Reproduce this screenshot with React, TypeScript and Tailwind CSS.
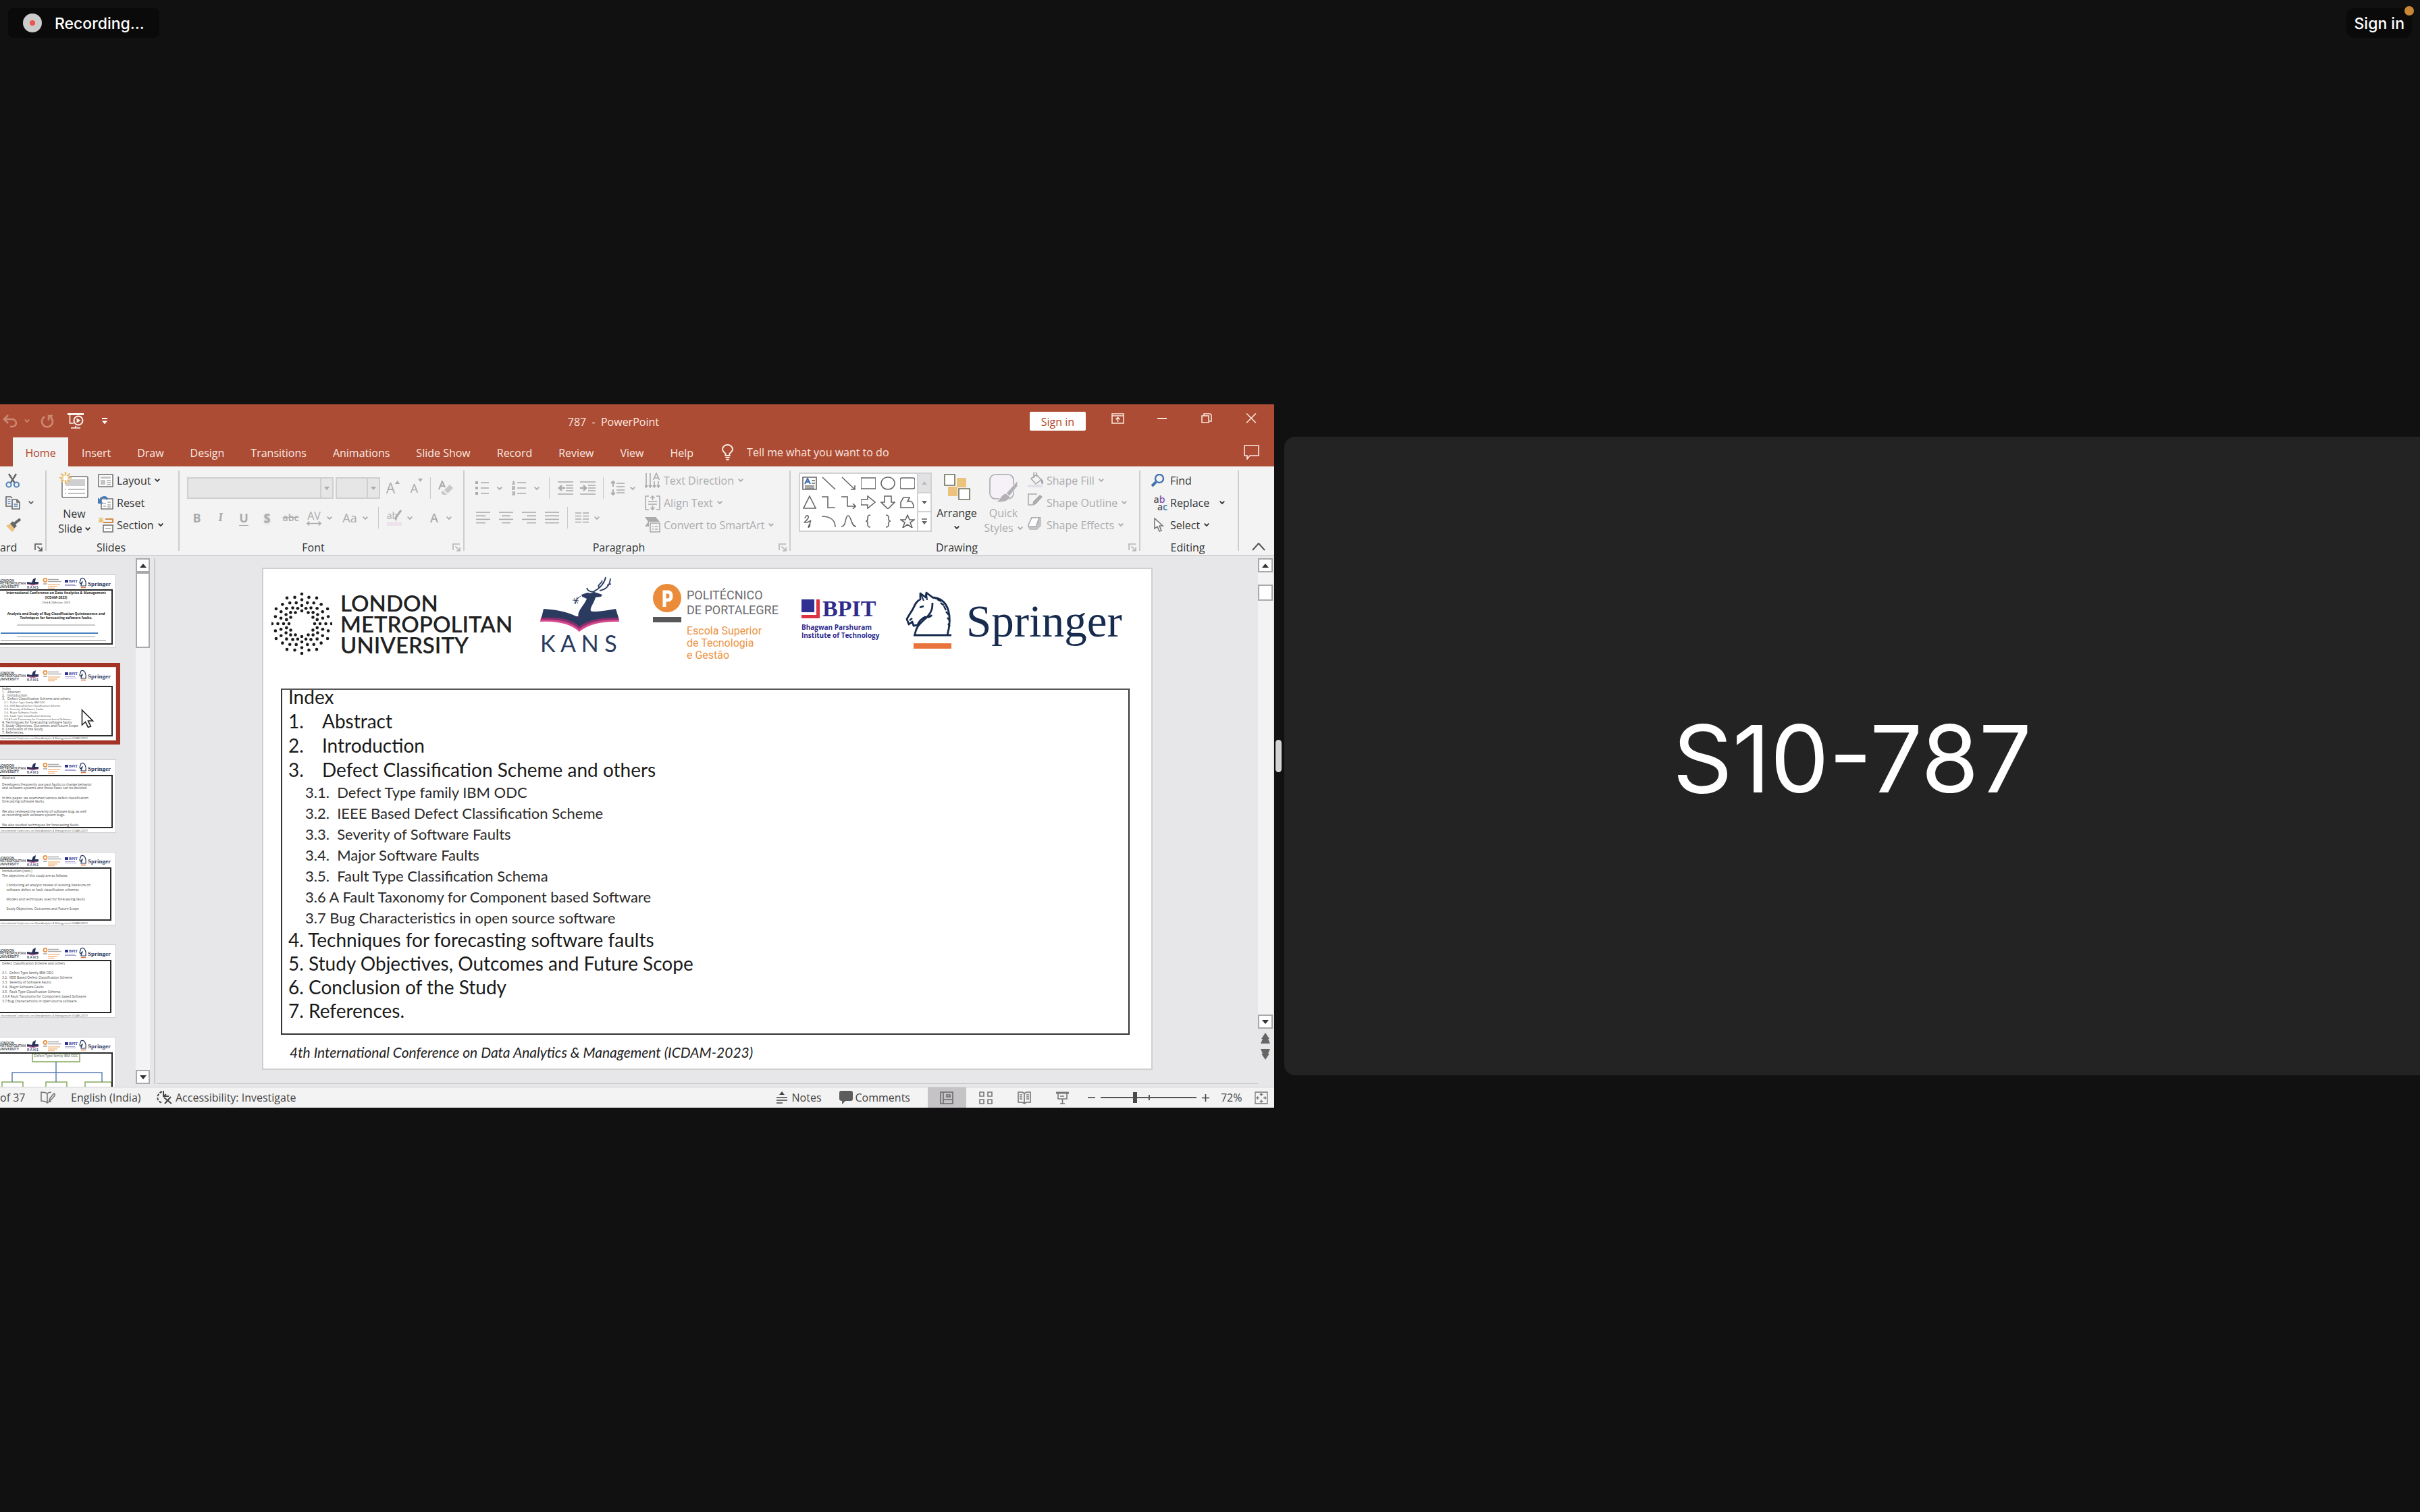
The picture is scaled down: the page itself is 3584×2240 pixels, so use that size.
import React from "react";

type Kids = { children?: React.ReactNode };

const Chev = ({ className = "" }: { className?: string }) => (
  <svg className={`h-[5px] w-2 shrink-0 ${className}`} viewBox="0 0 8 5" fill="none" stroke="currentColor" strokeWidth="1.8">
    <path d="M0.7 0.7 4 4 7.3 0.7" />
  </svg>
);

const Svg = ({ w, h, className = "", children }: { w: number; h: number; className?: string } & Kids) => (
  <svg
    width={w}
    height={h}
    viewBox={`0 0 ${w} ${h}`}
    className={`shrink-0 ${className}`}
    fill="none"
    stroke="currentColor"
    strokeWidth="1.6"
    aria-hidden="true"
  >
    {children}
  </svg>
);

/* ---------- title bar ---------- */

function TitleBar() {
  return (
    <div className="flex h-[49px] text-[#fbe9e2]">
      <div className="flex min-w-0 flex-[850] items-center pl-1">
        <button aria-label="Undo" className="text-[#cd8873]">
          <Svg w={22} h={20}>
            <path strokeWidth="2.6" d="M8 1 2 7l6 6M2 7h11c9 0 9 11 1 11h-3" />
          </Svg>
        </button>
        <button aria-label="Undo options" className="ml-2.5 text-[#cd8873]"><Chev /></button>
        <button aria-label="Redo" className="ml-4 text-[#cd8873]">
          <Svg w={20} h={20}>
            <path strokeWidth="2.6" d="M6 3.5a8 8 0 1 0 8 0M18 2h-6v7" />
          </Svg>
        </button>
        <button aria-label="Start from beginning" className="ml-5 text-[#fdf3ee]">
          <Svg w={24} h={23}>
            <path strokeWidth="3" d="M0 1.5h24" />
            <path d="M3.5 3v12H9M5 22h14M12 22v-3" />
            <circle cx="16" cy="11" r="6.5" strokeWidth="2" />
            <path fill="currentColor" stroke="none" d="M13.5 7.5v7l6-3.5z" />
          </Svg>
        </button>
        <button aria-label="Customize toolbar" className="ml-[27px] text-white">
          <Svg w={8} h={10}>
            <path strokeWidth="2" d="M0 1h8" />
            <path fill="currentColor" stroke="none" d="M0 4.5h8L4 9.5z" />
          </Svg>
        </button>
      </div>
      <div className="flex items-center whitespace-pre pt-0.5">{"787  -  PowerPoint"}</div>
      <div className="flex min-w-0 flex-[899] items-center justify-end pr-[26px] text-[#fbe3d8]">
        <button className="mr-[38px] h-7 w-[83px] rounded-xs bg-white pt-0.5 text-[#b0452c]">Sign in</button>
        <button aria-label="Ribbon display options" className="mr-[49px]">
          <Svg w={19} h={16} className="-translate-y-1">
            <path d="M1 1h17v14H1zM1 4h17M9.500 13V6.500M6.500 9.500l3-3 3 3" />
          </Svg>
        </button>
        <button aria-label="Minimize" className="mr-[51px]">
          <Svg w={14} h={2} className="-translate-y-1"><path strokeWidth="2" d="M0 1h14" /></Svg>
        </button>
        <button aria-label="Restore" className="mr-[50px]">
          <Svg w={16} h={15} className="-translate-y-1">
            <path d="M1 4h10v10H1zM4 4V1h8q3 0 3 3v8h-3" />
          </Svg>
        </button>
        <button aria-label="Close">
          <Svg w={16} h={15} className="-translate-y-1"><path d="M1 .5l14 14M15 .5l-14 14" /></Svg>
        </button>
      </div>
    </div>
  );
}

const TABS = ["Insert", "Draw", "Design", "Transitions", "Animations", "Slide Show", "Record", "Review", "View", "Help"];

function TabBar() {
  return (
    <div className="flex h-[43px] items-stretch gap-px whitespace-nowrap pl-[19px] pr-[22px] text-[#fbe9e2]">
      <button className="w-[82px] bg-[#f3f3f3] pt-0.5 text-[#b0452c]">Home</button>
      {TABS.map((t) => (
        <button key={t} className="px-[19px] pt-0.5">{t}</button>
      ))}
      <label className="flex items-center gap-5 pl-[22px]">
        <Svg w={17} h={24}>
          <path strokeWidth="2" d="M5.500 17v-3C3.500 12 1 10.500 1 7.500a7.500 6.500 0 0 1 15 0c0 3-2.500 4.500-4.500 6.500v3zM5.500 20h6M6.500 23h4" />
        </Svg>
        <input
          aria-label="Tell me what you want to do"
          placeholder="Tell me what you want to do"
          className="w-[240px] bg-transparent placeholder:text-[#fbe9e2] placeholder:opacity-100"
        />
      </label>
      <button aria-label="Comments pane" className="ml-auto">
        <Svg w={23} h={22}><path d="M1 1h21v15H9l-4 5v-5H1z" /></Svg>
      </button>
    </div>
  );
}

/* ---------- ribbon ---------- */

const Launcher = ({ dim = false }: { dim?: boolean }) => (
  <button aria-label="More options" className={dim ? "text-[#b5b5b7]" : "text-[#555]"}>
    <Svg w={12} h={12}><path d="M1 10V1h10M4.500 4.500 11 11M11 6v5H6" /></Svg>
  </button>
);

function Group({ label, width, launcher, children }: { label: string; width: string; launcher?: "on" | "dim" } & Kids) {
  return (
    <section className={`flex shrink-0 ${width}`}>
      <div className="flex min-w-0 flex-1 flex-col pt-1">
        <div className="h-[105px]">{children}</div>
        <div className="flex h-[22px] items-center pr-1 text-[#333]">
          <span className={`flex-1 ${launcher === "on" ? "text-left" : launcher ? "pr-2 text-center" : "text-center"}`}>{label}</span>
          {launcher && <Launcher dim={launcher === "dim"} />}
        </div>
      </div>
      <div className="my-1.5 w-0.5 bg-[#cdcdcf]" />
    </section>
  );
}

const Cell = ({ w, label, chev, children }: { w: string; label: string; chev?: boolean } & Kids) => (
  <button aria-label={label} className={`flex h-8 shrink-0 items-center justify-center gap-2 ${w}`}>
    {children}
    {chev && <Chev />}
  </button>
);

const Sep = ({ w }: { w: string }) => (
  <div className={`flex h-8 shrink-0 justify-center ${w}`}><div className="w-px bg-[#c9c9cb]" /></div>
);

const Line = ({ icon, text, chev, far }: { icon: React.ReactNode; text: string; chev?: boolean; far?: boolean }) => (
  <button className="flex h-[33px] items-center whitespace-nowrap">
    <span className="flex w-7 shrink-0">{icon}</span>
    {text}
    {chev && <Chev className={far ? "ml-[15px]" : "ml-1.5"} />}
  </button>
);

const bars = (spec: [number, number][]) => (
  <Svg w={21} h={19}>
    {spec.map(([a, b], i) => (
      <path key={i} d={`M${a} ${1 + i * 5.2}H${b}`} />
    ))}
  </Svg>
);

function ClipboardGroup() {
  return (
    <Group label="ard" width="w-[69px]" launcher="on">
      <div className="flex flex-col pl-2 text-[#666]">
        <button aria-label="Cut" className="flex h-[33px] items-center">
          <Svg w={22} h={22}>
            <path strokeWidth="2.4" d="M5 1l8.500 13M16 1 8 14" />
            <circle cx="5" cy="17" r="3.600" stroke="#4f81bd" strokeWidth="2" />
            <circle cx="16.500" cy="17" r="3.600" stroke="#4f81bd" strokeWidth="2" />
          </Svg>
        </button>
        <button aria-label="Copy" className="flex h-[33px] items-center gap-3">
          <Svg w={22} h={20}>
            <path d="M9 15H1V1h7l2 2M10 5h7l4 4v10H10zM17 5v4h4" />
            <path stroke="#4f81bd" d="M3.500 5h4M3.500 8h4M3.500 11h4M12.500 12h6M12.500 15h6" />
          </Svg>
          <Chev />
        </button>
        <button aria-label="Format painter" className="flex h-[33px] items-center">
          <Svg w={24} h={20}>
            <path fill="#ebc37d" stroke="none" d="M1 11l6-3 7 8-4 4z" />
            <path strokeWidth="5" d="M9 6l6 7" />
            <path strokeWidth="4" d="M13 8l9-7" />
          </Svg>
        </button>
      </div>
    </Group>
  );
}

const Burst = () => (
  <path stroke="#e8bd6c" strokeWidth="2.4" d="M9 0v18M0 9h18M2.500 2.500l13 13M15.500 2.500l-13 13" />
);

function SlidesGroup() {
  return (
    <Group label="Slides" width="w-[197px]">
      <div className="flex pl-[15px] text-[#333]">
        <button className="flex w-[52px] flex-col items-center pt-1 leading-[22px]">
          <Svg w={44} h={39} className="text-[#777]">
            <rect x="4" y="7" width="38" height="31" rx="2" fill="#fff" />
            <path stroke="none" fill="#cfcfd1" d="M9 11h29v10H9z" />
            <path d="M8 26h2M13 26h25M8 32h2M13 32h25" stroke="#aaa" />
            <circle cx="9" cy="9" r="6" fill="#f3f3f3" stroke="none" />
            <Burst />
            <circle cx="9" cy="9" r="3.500" fill="#fff" stroke="none" />
          </Svg>
          <span className="mt-3">New</span>
          <span className="flex items-center gap-1">Slide <Chev /></span>
        </button>
        <div className="flex flex-col items-start pl-[9px]">
          <Line
            text="Layout"
            chev
            icon={
              <Svg w={23} h={20} className="text-[#777]">
                <rect x="1" y="1" width="21" height="18" fill="#fff" />
                <path stroke="none" fill="#c4c4c6" d="M4 4h15v3H4zM4 9h7v7H4z" />
                <path d="M13 10h6M13 13h6M13 16h6" stroke="#aaa" />
              </Svg>
            }
          />
          <Line
            text="Reset"
            icon={
              <Svg w={23} h={20} className="text-[#777]">
                <path fill="#fff" d="M5 4h17v15H5z" />
                <path stroke="#aaa" d="M8 11h4M14 9h5M8 15h4M14 13h5M14 16h5" />
                <path stroke="#4779b5" strokeWidth="3" d="M3 8C4 0 12 0 14 5" />
                <path fill="#4779b5" stroke="none" d="M0 2v9h8z" />
              </Svg>
            }
          />
          <Line
            text="Section"
            chev
            icon={
              <Svg w={23} h={23} className="text-[#777]">
                <g transform="scale(.5)"><Burst /></g>
                <path stroke="#d08a4c" d="M11 3h11v5H8" strokeWidth="2" />
                <rect x="8" y="12" width="14" height="10" fill="#fff" />
                <path stroke="#aaa" d="M11 17h8" />
              </Svg>
            }
          />
        </div>
      </div>
    </Group>
  );
}

function Combo({ w, label }: { w: string; label: string }) {
  return (
    <div className={`relative h-8 shrink-0 ${w}`}>
      <select aria-label={label} disabled className="h-8 w-full appearance-none border-2 border-[#cfcfd1] bg-[#e6e6e7]" />
      <div className="pointer-events-none absolute inset-y-0 right-0 flex w-5 items-center justify-center border-2 border-[#cfcfd1] text-[#aaa]">
        <Svg w={8} h={5}><path fill="currentColor" stroke="none" d="M0 0h8L4 5z" /></Svg>
      </div>
    </div>
  );
}

function FontGroup() {
  return (
    <Group label="Font" width="w-[422px]" launcher="dim">
      <div className="flex pl-[11px] pt-3 text-[#ababad]">
        <Combo w="w-[217px]" label="Font name" />
        <div className="w-[3px]" />
        <Combo w="w-[66px]" label="Font size" />
        <Cell w="w-[38px]" label="Increase font size">
          <span className="flex text-[21px]">A<Svg w={7} h={5}><path fill="currentColor" stroke="none" d="M0 5h7L3.500 0z" /></Svg></span>
        </Cell>
        <Cell w="w-8" label="Decrease font size">
          <span className="flex text-lg">A<Svg w={7} h={5}><path fill="currentColor" stroke="none" d="M0 0h7L3.500 5z" /></Svg></span>
        </Cell>
        <Sep w="w-[9px]" />
        <Cell w="w-9" label="Clear formatting">
          <Svg w={22} h={22}>
            <path strokeWidth="2" d="M1 13 6 1l4 9M3 8h5" />
            <path fill="#c9c7ca" stroke="none" d="M9 14l8-8 5 5-8 8z" />
            <path fill="#c9c7ca" stroke="none" d="M4 18l3-3 6 6h-6z" />
          </Svg>
        </Cell>
      </div>
      <div className="mt-3 flex pl-2 text-lg text-[#ababad]">
        <Cell w="w-[35px]" label="Bold"><b>B</b></Cell>
        <Cell w="w-[35px]" label="Italic"><i className="font-serif font-bold">I</i></Cell>
        <Cell w="w-[34px]" label="Underline"><b className="underline underline-offset-4">U</b></Cell>
        <Cell w="w-[35px]" label="Shadow"><b className="text-shadow-md">S</b></Cell>
        <Cell w="w-[35px]" label="Strikethrough"><span className="text-sm font-semibold line-through">abc</span></Cell>
        <Cell w="w-[50px]" label="Character spacing" chev>
          <span className="flex flex-col items-center text-base leading-4">
            AV
            <Svg w={22} h={7}><path d="M1 3.500h20M4 .5l-3 3 3 3M18 .5l3 3-3 3" /></Svg>
          </span>
        </Cell>
        <Cell w="w-14" label="Change case" chev>Aa</Cell>
        <Sep w="w-3" />
        <Cell w="w-[52px]" label="Text highlight color" chev>
          <span className="flex flex-col">
            <span className="flex text-sm leading-[18px]">
              ab<Svg w={10} h={16} className="-ml-1"><path strokeWidth="3" d="M9 1 1 12v4" /></Svg>
            </span>
            <span className="h-1.5 bg-[#eee3ea]" />
          </span>
        </Cell>
        <Cell w="w-[66px]" label="Font color" chev><span className="px-1 font-semibold">A</span></Cell>
      </div>
    </Group>
  );
}

const indentIcon = (d: string) => (
  <Svg w={23} h={20}><path d="M0 1h23M12 6h11M12 10h11M12 14h11M0 19h23" /><path strokeWidth="2.400" d={d} /></Svg>
);

function ParagraphGroup() {
  return (
    <Group label="Paragraph" width="w-[483px]" launcher="dim">
      <div className="flex text-[#ababad]">
        <div className="w-[267px] pl-2.5 pt-3">
          <div className="flex">
            <Cell w="w-[52px]" label="Bullets" chev>
              <Svg w={20} h={22} className="mr-1">
                <path d="M8 3h12M8 11h12M8 19h12" />
                <path strokeWidth="4" d="M0 3h4M0 11h4M0 19h4" />
              </Svg>
            </Cell>
            <Cell w="w-[57px]" label="Numbering" chev>
              <Svg w={21} h={22} className="mr-1">
                <path d="M8 3h13M8 11h13M8 19h13M1 1.500h2V5M0 5h5M0 9h4v2H1v2h4M0 17h4v4H0M1 19h3" />
              </Svg>
            </Cell>
            <Sep w="w-[13px]" />
            <Cell w="w-[34px]" label="Decrease indent">{indentIcon("M11 10H2M6 6l-4 4 4 4")}</Cell>
            <Cell w="w-[33px]" label="Increase indent">{indentIcon("M0 10h9M5 6l4 4-4 4")}</Cell>
            <Sep w="w-3" />
            <Cell w="w-[47px]" label="Line spacing" chev>
              <Svg w={21} h={22}>
                <path d="M9 4h12M9 9h12M9 14h12M9 18h12" />
                <path strokeWidth="2" d="M4 1v8M1 4l3-3 3 3M4 13v8M1 18l3 3 3-3" />
              </Svg>
            </Cell>
          </div>
          <div className="mt-3 flex">
            <Cell w="w-[34px]" label="Align left">{bars([[0, 21], [0, 14], [0, 21], [0, 14]])}</Cell>
            <Cell w="w-[34px]" label="Center">{bars([[0, 21], [4, 17], [0, 21], [4, 17]])}</Cell>
            <Cell w="w-[34px]" label="Align right">{bars([[0, 21], [7, 21], [0, 21], [7, 21]])}</Cell>
            <Cell w="w-[34px]" label="Justify">{bars([[0, 21], [0, 21], [0, 21], [0, 21]])}</Cell>
            <Sep w="w-3" />
            <Cell w="w-12" label="Columns" chev>
              <Svg w={20} h={16}><path d="M0 1h9M11 1h9M0 5.500h9M11 5.500h9M0 10h9M11 10h9M0 14.500h9M11 14.500h9" /></Svg>
            </Cell>
          </div>
        </div>
        <div className="flex flex-col items-start">
          <Line
            text="Text Direction"
            chev
            icon={<Svg w={23} h={23}><path d="M2 1v20M8 1v20M14 13v8M20 13v8M0 19l2 3 2-3M6 19l2 3 2-3M12 19l2 3 2-3M18 19l2 3 2-3M12.500 11 17 1l4.500 10M14 8h6" /></Svg>}
          />
          <Line
            text="Align Text"
            chev
            icon={<Svg w={23} h={22}><path d="M6 1H1v20h5M17 1h5v20h-5M5 9h13M5 13h13M11.500 1v6M8.500 4l3-3 3 3M11.500 15v6M8.500 18l3 3 3-3" /></Svg>}
          />
          <Line
            text="Convert to SmartArt"
            chev
            icon={
              <Svg w={23} h={23}>
                <path fill="currentColor" stroke="none" d="M0 0h16l6 7H6v7H0l5-7z" />
                <rect x="8" y="9" width="14" height="13" fill="#f3f3f3" />
                <path d="M11 14h2M15 14h4M11 18h2M15 18h4" />
              </Svg>
            }
          />
        </div>
      </div>
    </Group>
  );
}

const SHAPES = [
  "M1 1h20v18H1zM4 14h14M4 17h14M14 6h5M14 10h5",
  "M1 1l19 18",
  "M1 1l19 18M20 13v6h-6",
  "M0 2h22v16H0z",
  "M11 1a10 9 0 1 0 .1 0z",
  "M3 2h16q3 0 3 3v10q0 3-3 3H3q-3 0-3-3V5q0-3 3-3z",
  "M11 1l9 18H2z",
  "M0 2h9v16h11",
  "M0 2h9v14h12M17 12l4 4-4 4",
  "M0 6h10V1l11 9-11 9v-5H0z",
  "M6 1h10v9h5L11 20 1 10h5z",
  "M5 3h9l-3 6c5-2 9 1 9 9H1V10z",
  "M4 6C6-1 12 2 8 7s-7 5-2 5 8-6 6 0-5 8 0 6M9 20l3-5",
  "M0 3c12 0 20 5 20 16",
  "M0 18C8 18 5 2 10 2s4 16 12 16",
  "M14 1q-4 0-4 4v2q0 3-3 3 3 0 3 3v2q0 4 4 4",
  "M8 1q4 0 4 4v2q0 3 3 3-3 0-3 3v2q0 4-4 4",
  "M11 1l3 7h7l-6 4 3 8-7-5-7 5 3-8-6-4h7z",
];

function DrawingGroup() {
  return (
    <Group label="Drawing" width="w-[518px]" launcher="dim">
      <div className="flex pl-3 pt-[5px] text-[#ababad]">
        <div className="flex h-[88px] w-[197px] border-2 border-[#d2d2d4] bg-white text-[#666]">
          <div className="grid flex-1 grid-cols-6 place-items-center">
            {SHAPES.map((d, i) => (
              <button key={i} aria-label={`Shape ${i + 1}`}>
                <Svg w={22} h={20}>
                  <path d={d} />
                  {i === 0 && <path stroke="#3a70b0" strokeWidth="2" d="M4 11 8 3l4 8M6 8h4" />}
                </Svg>
              </button>
            ))}
          </div>
          <div className="flex w-5 flex-col divide-y-2 divide-[#d2d2d4] border-l-2 border-[#d2d2d4]">
            <button aria-label="Previous shapes" className="flex flex-1 items-center justify-center bg-[#e2e2e4] text-[#bbb]">
              <Svg w={8} h={5}><path fill="currentColor" stroke="none" d="M0 5h8L4 0z" /></Svg>
            </button>
            <button aria-label="Next shapes" className="flex flex-1 items-center justify-center">
              <Svg w={8} h={5}><path fill="currentColor" stroke="none" d="M0 0h8L4 5z" /></Svg>
            </button>
            <button aria-label="All shapes" className="flex flex-1 items-center justify-center">
              <Svg w={8} h={9}><path d="M0 1h8" /><path fill="currentColor" stroke="none" d="M0 4h8L4 9z" /></Svg>
            </button>
          </div>
        </div>
        <button className="flex w-[74px] flex-col items-center leading-[22px] text-[#333]">
          <Svg w={39} h={39} className="mt-0.5">
            <path stroke="none" fill="#ebc37d" d="M19 6h14v14H19zM6 19h14v14H6z" />
            <path stroke="#6b6f57" fill="#fff" d="M1 1h15v16H1zM22 22h16v16H22z" />
          </Svg>
          <span className="mt-2">Arrange</span>
          <Chev className="mt-2" />
        </button>
        <button className="flex w-[60px] flex-col items-center pl-1 leading-[22px]">
          <Svg w={42} h={43} className="mt-0.5">
            <rect x="1" y="1" width="35" height="36" rx="8" fill="#f6f0f8" />
            <path fill="#b3b1b5" stroke="#f3f3f3" strokeWidth="1" d="M42 10v8L30 33l-5-4zM25 29l6 5c-3 8-12 8-21 8 6-2 7-12 15-13z" />
          </Svg>
          <span className="mt-1">Quick</span>
          <span className="flex items-center gap-1.5">Styles <Chev /></span>
        </button>
        <div className="-mt-[5px] flex flex-col items-start pl-2">
          <Line
            text="Shape Fill"
            chev
            icon={<Svg w={24} h={23}><path d="M5 9l8-6 7 8-8 6zM9 8V0h4v6M20 10c4 3 2 8 1 6z" /><path stroke="none" fill="#e2dfe6" d="M0 18h22v4H0z" /></Svg>}
          />
          <Line
            text="Shape Outline"
            chev
            icon={<Svg w={24} h={22} className="-translate-y-1"><path d="M14 2H1v16h6" /><path fill="currentColor" stroke="none" d="M18 3l4 3-10 11-5 2 1-6z" /></Svg>}
          />
          <Line
            text="Shape Effects"
            chev
            icon={<Svg w={24} h={20} className="-translate-y-0.5"><path fill="#c4c2c6" stroke="none" d="M5 0h15v13l-6 6H3l-3-4z" /><path fill="#fff" d="M6 1h11l-4 11q0 2-2 2H3q-2 0-2-2z" /></Svg>}
          />
        </div>
      </div>
    </Group>
  );
}

function EditingGroup() {
  return (
    <Group label="Editing" width="w-[146px]">
      <div className="flex flex-col items-start pl-4 text-[#333]">
        <Line
          text="Find"
          icon={<Svg w={20} h={20} className="text-[#3f72ae]"><circle cx="12" cy="7" r="6" strokeWidth="2.400" /><path strokeWidth="4" d="M7 12l-6 6" /></Svg>}
        />
        <Line
          text="Replace"
          chev
          far
          icon={
            <span className="flex w-6 flex-col text-sm font-semibold leading-[11px] text-[#555]">
              <span>a<span className="text-[#8a56a8]">b</span></span>
              <span className="text-right text-[#3f72ae]"><span className="text-[#555]">a</span>c</span>
            </span>
          }
        />
        <Line
          text="Select"
          chev
          icon={<Svg w={18} h={22} className="ml-1 text-[#777]"><path fill="#fff" d="M1 1v15l4-3 3 7 3-1-3-7h5z" /></Svg>}
        />
      </div>
    </Group>
  );
}

function Ribbon() {
  return (
    <div className="flex h-[133px] border-b-2 border-[#d3d3d5] bg-[#f3f3f3]">
      <ClipboardGroup />
      <SlidesGroup />
      <FontGroup />
      <ParagraphGroup />
      <DrawingGroup />
      <EditingGroup />
      <div className="flex flex-1 items-end justify-end pb-1.5 pr-[13px]">
        <button aria-label="Collapse ribbon" className="text-[#555]">
          <Svg w={20} h={12}><path strokeWidth="2" d="M1 11l9-10 9 10" /></Svg>
        </button>
      </div>
    </div>
  );
}

/* ---------- thumbnails ---------- */

const MiniLogos = () => (
  <svg className="absolute right-0 top-0 h-[22px] w-48" viewBox="0 0 192 22" aria-hidden="true">
    <circle cx="10" cy="12" r="6" fill="none" stroke="#333" strokeWidth="4" strokeDasharray="1 1" />
    <g fontFamily="Lato, sans-serif" fontWeight="700" fontSize="5" fill="#444">
      <text x="20" y="9.500">LONDON</text>
      <text x="20" y="14">METROPOLITAN</text>
      <text x="20" y="18.500">UNIVERSITY</text>
      <text x="61" y="19.500" fill="#2b3a5e">K A N S</text>
    </g>
    <path fill="#2b3357" d="M61 10l7 1 2-5 4-2-1 6 5 0v3l-8 1-9-1z" />
    <path d="M61 13l8 2 9-2" stroke="#b93a80" fill="none" />
    <circle cx="88" cy="7.500" r="2.600" fill="none" stroke="#eb8f3c" strokeWidth="1.600" />
    <path d="M85 13h6" stroke="#777" />
    <path d="M92 6.500h16M92 9.500h20" stroke="#aaa" strokeWidth="1.500" />
    <path d="M92 14h18M92 17h14M92 19.500h10" stroke="#f3bd8b" strokeWidth="1.300" />
    <path d="M117 7h5v4h-5z" fill="#2e3192" />
    <text x="123" y="11" fontFamily="Liberation Serif, serif" fontWeight="700" fontSize="5.500" fill="#2e3192">BPIT</text>
    <path d="M117 13.500h15M117 15.500h17" stroke="#a7a3cf" />
    <path d="M141 16c0-3 2-4 2-6l-3 3-1-2 2-6c4-2 8 2 7 11z" fill="none" stroke="#26385e" strokeWidth="1.200" />
    <path d="M141 18.500h7" stroke="#e8743b" strokeWidth="1.500" />
    <text x="151" y="16" fontFamily="Liberation Serif, serif" fontWeight="700" fontSize="9" fill="#2c3e66">Springer</text>
  </svg>
);

function Thumb({ selected, box, foot = true, children }: { selected?: boolean; box: string; foot?: boolean } & Kids) {
  return (
    <button
      aria-label="Slide thumbnail"
      className={`relative h-[109px] w-48 shrink-0 border bg-white text-left ${
        selected ? "border-[#e8d5d0] outline-6 outline-[#a33327]" : "border-[#cdcdcf]"
      }`}
    >
      <MiniLogos />
      <div className={`absolute left-1 overflow-hidden whitespace-pre border-2 border-[#2a2a2a] ${box}`}>{children}</div>
      {foot && (
        <span className="absolute bottom-0 left-5 text-[4px] italic leading-1 text-[#555]">
          International Conference on Data Analytics &amp; Management (ICDAM-2023)
        </span>
      )}
    </button>
  );
}

const Tri = ({ up }: { up?: boolean }) => (
  <Svg w={10} h={6}><path fill="#333" stroke="none" d={up ? "M0 6h10L5 0z" : "M0 0h10L5 6z"} /></Svg>
);

const ScrollBtn = ({ up, h = "h-[21px]" }: { up?: boolean; h?: string }) => (
  <button
    aria-label={up ? "Scroll up" : "Scroll down"}
    className={`flex w-full shrink-0 items-center justify-center border-2 border-[#a9a9ab] bg-white ${h}`}
  >
    <Tri up={up} />
  </button>
);

function Thumbnails() {
  return (
    <aside className="flex shrink-0 border-[#c6c6c8]">
      <div className="flex h-[786px] w-[201px] flex-col items-end gap-7 overflow-hidden pr-[29px] pt-[27px] text-[#444]">
        <Thumb box="right-1 top-[21px] h-[82px]" foot={false}>
          <div className="pl-3.5 text-center text-[5px] leading-[7px] text-[#222]">
            <b>International Conference on Data Analytics &amp; Management</b>
            <br />
            <b>(ICDAM-2023)</b>
            <br />
            <span className="text-[4px]">23rd &amp; 24th June 2023</span>
            <div className="mt-2.5 text-[5px] font-bold leading-1.5">
              Analysis and Study of Bug Classification Quintessence and
              <br />
              Techniques for forecasting software faults.
            </div>
            <div className="mt-1.5 h-px" />
            <div className="mx-6 h-0.5 bg-[#c9c9cb]" />
            <div className="mr-5 mt-2.5 h-0.5 bg-[#4b7fc0]" />
            <div className="mx-6 mt-1 h-px bg-[#9a9a9c]" />
            <div className="mr-2 mt-1 h-px bg-[#9a9a9c]" />
          </div>
        </Thumb>
        <Thumb selected box="right-1 top-[27px] h-[75px]">
          <div className="pl-4 text-[5px] leading-[5px]">
            {"Index\n1.   Abstract\n2.   Introduction\n3.   Defect Classification Scheme and others\n"}
            <span className="text-[4px]">
              {"   3.1.  Defect Type family IBM ODC\n   3.2.  IEEE Based Defect Classification Scheme\n   3.3.  Severity of Software Faults\n   3.4.  Major Software Faults\n   3.5.  Fault Type Classification Schema\n   3.6 A Fault Taxonomy for Component based Software\n"}
            </span>
            {"4. Techniques for forecasting software faults\n5. Study Objectives, Outcomes and Future Scope\n6. Conclusion of the Study\n7. References."}
          </div>
          <Svg w={20} h={30} className="absolute right-[25px] top-8 text-[#222]">
            <path fill="#fff" d="M1.500 2v22l5-4.500 4 8 4-1.500-4-8h7z" />
          </Svg>
        </Thumb>
        <Thumb box="right-1 top-[22px] h-[79px]">
          <div className="pl-4 text-[5px] leading-[5px]">
            {"Abstract\n\nDevelopers frequently use past faults to change behavior\nand software systems and those flaws can be decided.\n\n\nIn this paper, we examined various defect classification\nforecasting software faults.\n\n\nWe also reviewed the severity of software bug, as well\nas recording with software system bugs.\n\n\nWe also studied techniques for forecasting faults"}
          </div>
        </Thumb>
        <Thumb box="right-1.5 top-[22px] h-[79px]">
          <div className="pl-4 text-[5px] leading-[7px]">
            {"Introduction (cont.)\nThe objectives of this study are as follows:\n\n     Conducting an analytic review of existing literature on\n     software defect or fault classification schemes\n\n     Models and techniques used for forecasting faults\n\n     Study Objectives, Outcomes and Future Scope"}
          </div>
        </Thumb>
        <Thumb box="right-1.5 top-[22px] h-[79px]">
          <div className="pl-4 text-[5px] leading-[7px]">
            {"Defect Classification Scheme and others\n\n3.1.  Defect Type family IBM ODC\n3.2.  IEEE Based Defect Classification Scheme\n3.3.  Severity of Software Faults\n3.4.  Major Software Faults\n3.5.  Fault Type Classification Schema\n3.6 A Fault Taxonomy for Component based Software\n3.7 Bug Characteristics in open source software"}
          </div>
        </Thumb>
        <Thumb box="right-1 top-[22px] h-[79px]" foot={false}>
          <Svg w={184} h={76}>
            <g stroke="#85aa5e" strokeWidth="1.500">
              <path d="M61 0h70v12H61zM16 42h31v20H16zM81 42h31v20H81zM139 42h39v20h-39z" />
            </g>
            <path stroke="#5b7fb5" strokeWidth="1.500" d="M96 12v30M31 42V28h133v14" />
            <text x="96" y="5" fontSize="5" textAnchor="middle" stroke="none" fill="#555">Defect Type family IBM ODC</text>
          </Svg>
        </Thumb>
      </div>
      <div className="mb-1 mt-[3px] flex w-[21px] flex-col bg-[#f3f3f3]">
        <ScrollBtn up />
        <div className="h-[112px] border-2 border-[#a9a9ab] bg-white" />
        <div className="flex-1" />
        <ScrollBtn />
      </div>
      <div className="mb-1 ml-1.5 mt-[3px] w-0.5 bg-[#cbcbcd]" />
    </aside>
  );
}

/* ---------- current slide ---------- */

const RINGS: [number, number][] = [[44, 0], [40.5, 15], [35.5, 0], [32, 15], [27, 0], [23.5, 15], [19, 0]];

const LondonRing = () => (
  <svg className="h-24 w-[90px] shrink-0" viewBox="-45 -48 90 96" fill="#1a1a1a" aria-hidden="true">
    {RINGS.flatMap(([r, off]) =>
      Array.from({ length: 12 }, (_, i) => {
        const a = ((off + i * 30) * Math.PI) / 180;
        return <circle key={`${r}-${i}`} cx={r * Math.cos(a)} cy={r * Math.sin(a)} r="2.300" />;
      }),
    )}
  </svg>
);

const Stag = () => (
  <svg className="h-[84px] w-[118px]" viewBox="0 0 118 84" aria-hidden="true">
    <path fill="#d6488e" d="M1 60 0 66Q40 64 58 81 76 65 117 66L116 60Q76 60 58 74 42 60 1 60z" />
    <path fill="#8a2f6d" d="M2 58 1 63Q40 61 58 77 76 62 117 63L115 58z" />
    <path
      fill="#2a3b5f"
      d="M5 47Q38 49 57 60C54 50 64 44 69 32L62 29 61 26 70 23Q76 25 80 22L92 26 90 29 82 30C80 38 73 46 75 50Q78 53 112 47L116 60Q76 59 58 73 42 58 2 60z"
    />
    <g fill="none" stroke="#2a3b5f" strokeWidth="1.800">
      <path d="M78 22C88 17 95 10 97 0M88 16C82 12 94 8 91 5M88 20c10-2 15-7 16-18M99 12l6-2M80 22c-6 0-10-2-11-6" />
      <path strokeWidth="1" d="M60 28l-6 5M50 31l6 8M57 30l-7 9M48 34l9 1M52 40l3-11" />
    </g>
  </svg>
);

const Horse = () => (
  <svg className="h-[86px] w-[70px] shrink-0" viewBox="0 0 70 86" aria-hidden="true">
    <g fill="none" stroke="#172b4f" strokeWidth="2.800" strokeLinejoin="round">
      <path d="M14 66c1-14 11-20 19-28 7-8 7-14 7-20M12 66h56M62 66C69 40 66 12 40 10l-9-7-1 7-8-6v9C14 16 13 26 8 32L2 42l3 8 5-4 2 6 6-1c2-6 5-9 11-12 5 1 8 0 10-3" />
      <path strokeWidth="2.400" d="M21 25l6-2M6 44l4-3M40 10l7 2M47 13l6 3M52 18l5 4M57 23l3 6M60 31l4 5M62 40l4 5M63 49l3 4" />
      <path strokeWidth="2" d="M23 5l4 10M31 5l1 9" />
    </g>
    <path fill="#e8743b" d="M12 78h56v8H12z" />
  </svg>
);

function Logos() {
  return (
    <div className="flex h-[177px] items-start pl-3">
      <div className="flex w-[398px] shrink-0 items-center gap-3 pt-[33px]">
        <LondonRing />
        <div className="font-[Lato,sans-serif] text-[33px] font-semibold leading-[31px] text-[#222]">
          LONDON
          <br />
          METROPOLITAN
          <br />
          UNIVERSITY
        </div>
      </div>
      <div className="flex w-[167px] shrink-0 flex-col pt-3">
        <Stag />
        <span className="-mt-1 whitespace-nowrap font-[Lato,sans-serif] text-[34px] leading-9 text-[#2a3b5f]">K A N S</span>
      </div>
      <div className="flex w-[220px] shrink-0 gap-2 pt-[22px] font-[Roboto,sans-serif]">
        <svg className="h-[58px] w-[42px] shrink-0" viewBox="0 0 42 58" aria-hidden="true">
          <circle cx="21" cy="21" r="21" fill="#ea8c3a" />
          <path fill="none" stroke="#fff" strokeWidth="5" d="M17 34V12h5q5 0 5 6t-5 6h-5" />
          <path fill="#58585a" d="M0 49h42v8H0z" />
        </svg>
        <div className="pt-1.5 text-lg leading-[22px] text-[#6c6c6e]">
          POLITÉCNICO
          <br />
          DE PORTALEGRE
          <div className="mt-[11px] text-base leading-[18px] text-[#ec9444]">
            Escola Superior
            <br />
            de Tecnologia
            <br />
            e Gestão
          </div>
        </div>
      </div>
      <div className="w-[154px] shrink-0 whitespace-nowrap pt-[42px] text-[#2e2c8c]">
        <div className="flex h-[34px] items-center gap-1">
          <svg className="h-7 w-[27px]" viewBox="0 0 27 28" aria-hidden="true">
            <path fill="#2e3192" d="M0 0h19v19H0z" />
            <path fill="#dc3440" d="M22 0h5v28H0v-5h22z" />
          </svg>
          <span className="font-[Liberation_Serif,serif] text-[34px] font-bold leading-[34px]">BPIT</span>
        </div>
        <div className="mt-1 text-[10px] font-bold leading-3">
          Bhagwan Parshuram
          <br />
          Institute of Technology
        </div>
      </div>
      <div className="flex pt-8">
        <Horse />
        <span className="ml-5 mt-3 font-[Liberation_Serif,serif] text-[67px] leading-[66px] text-[#172b4f]">Springer</span>
      </div>
    </div>
  );
}

const MAIN_A = [["1.", "Abstract"], ["2.", "Introduction"], ["3.", "Defect Classification Scheme and others"]];
const SUB = [
  "3.1.  Defect Type family IBM ODC",
  "3.2.  IEEE Based Defect Classification Scheme",
  "3.3.  Severity of Software Faults",
  "3.4.  Major Software Faults",
  "3.5.  Fault Type Classification Schema",
  "3.6 A Fault Taxonomy for Component based Software",
  "3.7 Bug Characteristics in open source software",
];
const MAIN_B = [
  "4. Techniques for forecasting software faults",
  "5. Study Objectives, Outcomes and Future Scope",
  "6. Conclusion of the Study",
  "7. References.",
];

function Slide() {
  return (
    <article className="mt-[17px] w-full max-w-[1319px] self-start border-2 border-[#cfcfd1] bg-white pb-2.5">
      <Logos />
      <div className="ml-[26px] mr-8 h-[513px] border-2 border-[#333] border-t-[#58585a] pl-[9px] font-[Lato,sans-serif] text-[28px] leading-9 text-[#1a1a1a]">
        <h1 className="-mt-2">Index</h1>
        {MAIN_A.map(([n, t]) => (
          <div key={n} className="flex"><span className="w-[50px]">{n}</span>{t}</div>
        ))}
        <div className="whitespace-pre pl-[25px] text-[22px] leading-[31px] text-[#2a2a2a]">
          {SUB.map((t) => <div key={t}>{t}</div>)}
        </div>
        <div className="leading-[35px]">
          {MAIN_B.map((t) => <div key={t}>{t}</div>)}
        </div>
      </div>
      <p className="ml-[39px] mt-3 font-[Lato,sans-serif] text-[21px] italic leading-7 text-[#222]">
        4th International Conference on Data Analytics &amp; Management (ICDAM-2023)
      </p>
    </article>
  );
}

function Workspace() {
  return (
    <div className="flex h-[786px] bg-[#e7e7ea]">
      <Thumbnails />
      <main className="mb-1 ml-0.5 flex min-w-0 flex-1 justify-center border-b border-[#bfbfc1]"><Slide /></main>
      <div className="mr-0.5 mt-[3px] flex h-[743px] w-[22px] shrink-0 flex-col">
        <ScrollBtn up />
        <div className="h-[18px] shrink-0 bg-[#f3f3f3]" />
        <div className="h-6 shrink-0 border-2 border-[#a9a9ab] bg-white" />
        <div className="flex-1 bg-[#f3f3f3]" />
        <ScrollBtn />
        <div className="flex h-[46px] shrink-0 flex-col items-center justify-between pt-1.5">
          <button aria-label="Previous slide">
            <Svg w={14} h={16}><path fill="#666" stroke="none" d="M7 0l6 9h-2l3 7H0l3-7H1z" /></Svg>
          </button>
          <button aria-label="Next slide">
            <Svg w={14} h={16}><path fill="#666" stroke="none" d="M7 16l6-9h-2l3-7H0l3 7H1z" /></Svg>
          </button>
        </div>
      </div>
    </div>
  );
}

/* ---------- status bar ---------- */

function StatusBar() {
  return (
    <footer className="flex h-[31px] items-center whitespace-nowrap border-t border-[#cfcfd1] bg-[#f3f3f3] pr-[9px] text-[#444]">
      <span className="w-[60px] shrink-0">of 37</span>
      <button aria-label="Spelling" className="w-[45px] shrink-0 text-[#777]">
        <Svg w={22} h={18}>
          <path d="M10 16V3Q7 1 1 1v13q6 0 9 3 2-2 6-2.500M10 3q3-2 6-2M13 14l1-4 6-7 2 2-6 7z" />
        </Svg>
      </button>
      <button className="w-[127px] shrink-0 text-left">English (India)</button>
      <button className="flex items-center gap-1">
        <Svg w={24} h={20}>
          <path strokeWidth="2" strokeDasharray="4 2" d="M8 1C-1 5-1 15 8 18" />
          <path strokeWidth="2" d="M10 0v8h8M14 5l-4 3 0-5M11 10l11 9M21 9 12 19" />
        </Svg>
        Accessibility: Investigate
      </button>
      <button className="ml-auto flex items-center gap-[7px]">
        <Svg w={16} h={18}><path d="M0 9h16M0 13h16M0 17h9" /><path fill="currentColor" stroke="none" d="M4 5h8L8 0z" /></Svg>
        Notes
      </button>
      <button className="ml-[26px] flex items-center gap-1">
        <Svg w={20} h={20}><path fill="#5c5c5e" stroke="none" d="M3 0h14q3 0 3 3v9q0 3-3 3h-8l-5 5v-5q-4 0-4-3V3q0-3 3-3z" /></Svg>
        Comments
      </button>
      <button aria-label="Normal view" className="ml-[26px] flex h-full w-[57px] shrink-0 items-center justify-center bg-[#c6c3c7] text-[#6a6a6c]">
        <Svg w={20} h={19}><path d="M1 1h18v17H1zM5 1v17M5 12h14M10 5h5v3h-5z" /></Svg>
      </button>
      <div className="flex shrink-0 items-center gap-[37px] pl-[19px] text-[#777]">
        <button aria-label="Slide sorter">
          <Svg w={20} h={19}><path d="M1 1h6v6H1zM13 1h6v6h-6zM1 12h6v6H1zM13 12h6v6h-6z" /></Svg>
        </button>
        <button aria-label="Reading view">
          <Svg w={20} h={19}><path d="M1 1h6l3 2 3-2h6v15h-6l-3 2-3-2H1zM10 3v15M3 5h4M3 8h4M3 11h4M13 5h4M13 8h4M13 11h4" /></Svg>
        </button>
        <button aria-label="Slide show">
          <Svg w={19} h={19}><path strokeWidth="3" d="M0 2h19" /><path d="M3 3v8h13V3M6 7h6M9.500 11v7M6 18h7" /></Svg>
        </button>
      </div>
      <button aria-label="Zoom out" className="ml-7">
        <Svg w={11} h={11}><path d="M0 5h11" /></Svg>
      </button>
      <input
        type="range"
        aria-label="Zoom"
        min={0}
        max={100}
        defaultValue={35}
        className="ml-2 h-4 w-[142px] shrink-0 appearance-none bg-[linear-gradient(#555,#555),linear-gradient(#555,#555)] bg-[length:100%_2px,2px_8px] bg-[position:center,51%_center] bg-no-repeat [&::-webkit-slider-thumb]:h-4 [&::-webkit-slider-thumb]:w-1.5 [&::-webkit-slider-thumb]:appearance-none [&::-webkit-slider-thumb]:bg-[#4a4a4c]"
      />
      <button aria-label="Zoom in" className="ml-2">
        <Svg w={11} h={11}><path d="M0 5.500h11M5.500 0v11" /></Svg>
      </button>
      <button className="ml-[17px] w-[50px] shrink-0 text-left">72%</button>
      <button aria-label="Fit to window">
        <Svg w={20} h={19} className="text-[#777]">
          <path strokeWidth="1.300" d="M1 1h18v17H1zM10 3v4M10 12v4M3 9.500h4M13 9.500h4M8 5l2-2 2 2M8 14l2 2 2-2M5 7.500l-2 2 2 2M15 7.500l2 2-2 2" />
        </Svg>
      </button>
    </footer>
  );
}

export default function App() {
  return (
    <div className="relative flex min-h-screen w-full items-center bg-[#111] font-[Inter,sans-serif]">
      <div className="absolute left-3 top-3 flex h-11 items-center gap-[19px] rounded-lg bg-[#0a0a0a] pl-[22px] pr-[22px] text-[23px] font-medium text-white">
        <span className="flex size-7 items-center justify-center rounded-full bg-[#cbcbcb]">
          <span className="size-2 rounded-full bg-[#f0524d]" />
        </span>
        <span className="pt-0.5">Recording...</span>
      </div>
      <button className="absolute right-3 top-3 flex h-11 items-center rounded-xl bg-[#0a0a0a] px-[11px] pt-0.5 text-[23px] font-medium text-white">
        Sign in
        <span className="absolute -right-[3px] -top-[3px] size-[14px] rounded-full bg-[#c98735]" />
      </button>

      <section className="w-[52.65%] shrink-0 overflow-hidden bg-[#ac4c34] font-[Open_Sans,Noto_Sans,sans-serif] text-base leading-[22px]">
        <TitleBar />
        <TabBar />
        <Ribbon />
        <Workspace />
        <StatusBar />
      </section>

      <div className="flex w-[15px] shrink-0 justify-center">
        <div className="mr-0.5 h-12 w-[9px] rounded-full bg-[#d4d4d4]" />
      </div>

      <section className="flex aspect-video min-w-0 flex-1 items-center justify-center rounded-l-2xl bg-[#232323]">
        <h2 className="pt-2 text-[138px] leading-none text-white">S10-787</h2>
      </section>
    </div>
  );
}
